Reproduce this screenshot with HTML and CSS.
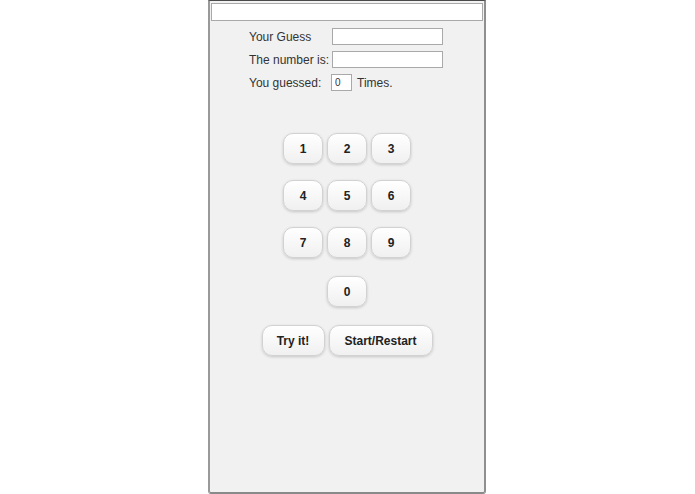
FILE: index.html
```html
<!DOCTYPE html>
<html>
<head>
<meta charset="utf-8">
<link rel="stylesheet" href="styles.css">
</head>
<body>
<div class="phone">
  <div class="topbar"><input class="urlbar" type="text"></div>
  <div class="form">
    <div class="row"><span class="label">Your Guess</span><input class="field" type="text"></div>
    <div class="row"><span class="label">The number is:</span><input class="field" type="text"></div>
    <div class="row"><span class="label">You guessed:</span><input class="count" type="text" value="0"><span class="times">Times.</span></div>
  </div>
  <div class="pad">
    <div class="keys"><button class="key">1</button><button class="key">2</button><button class="key">3</button></div>
    <div class="keys"><button class="key">4</button><button class="key">5</button><button class="key">6</button></div>
    <div class="keys"><button class="key">7</button><button class="key">8</button><button class="key">9</button></div>
    <div class="keys"><button class="key">0</button></div>
    <div class="keys actions"><button class="key try">Try it!</button><button class="key restart">Start/Restart</button></div>
  </div>
</div>
</body>
</html>
```

FILE: styles.css
```css
html, body {
  margin: 0;
  padding: 0;
  background: #ffffff;
}
body {
  font-family: "Liberation Sans", Arial, sans-serif;
}
.phone {
  box-sizing: border-box;
  width: 278px;
  height: 494px;
  margin-left: 208px;
  background: #f1f1f1;
  border-left: 2px solid #999999;
  border-right: 2px solid #8f8f8f;
  border-bottom: 2px solid #8a8a8a;
  border-top: 1px solid #4a4a4a;
  border-radius: 0 0 3px 3px;
}
.topbar {
  padding: 2px 1px 0 1px;
}
.urlbar {
  display: block;
  box-sizing: border-box;
  width: 100%;
  height: 18px;
  margin: 0;
  border: 1px solid #a9a9a9;
  background: #ffffff;
  outline: none;
}
.form {
  padding: 4px 0 0 39px;
}
.row {
  display: flex;
  align-items: center;
  height: 23px;
  font-size: 12px;
  color: #333;
}
.label {
  width: 83px;
}
.field {
  box-sizing: border-box;
  width: 111px;
  height: 17px;
  margin: 0;
  border: 1px solid #a9a9a9;
  background: #fff;
  padding: 0;
}
.count {
  box-sizing: border-box;
  width: 21px;
  height: 17px;
  margin: 0 0 0 -1px;
  border: 1px solid #a9a9a9;
  background: #fff;
  font-family: "Liberation Sans", Arial, sans-serif;
  font-size: 10px;
  padding: 0 0 0 3px;
  color: #333;
}
.times {
  margin-left: 5px;
}
.pad {
  display: flex;
  flex-direction: column;
  align-items: center;
  padding-top: 39px;
  gap: 16px;
}
.keys {
  display: flex;
  gap: 4px;
}
.keys + .keys + .keys + .keys {
  margin-top: 2px;
}
.key {
  box-sizing: border-box;
  width: 40px;
  height: 31px;
  margin: 0;
  padding: 0;
  border: 1px solid #d2d2d2;
  border-radius: 10px;
  background: linear-gradient(#ffffff, #f0f0f0);
  box-shadow: 0 1px 3px rgba(0,0,0,0.18);
  font-family: "Liberation Sans", Arial, sans-serif;
  font-weight: bold;
  font-size: 12px;
  color: #222;
}
.try {
  width: 63px;
}
.restart {
  width: 104px;
}
```
